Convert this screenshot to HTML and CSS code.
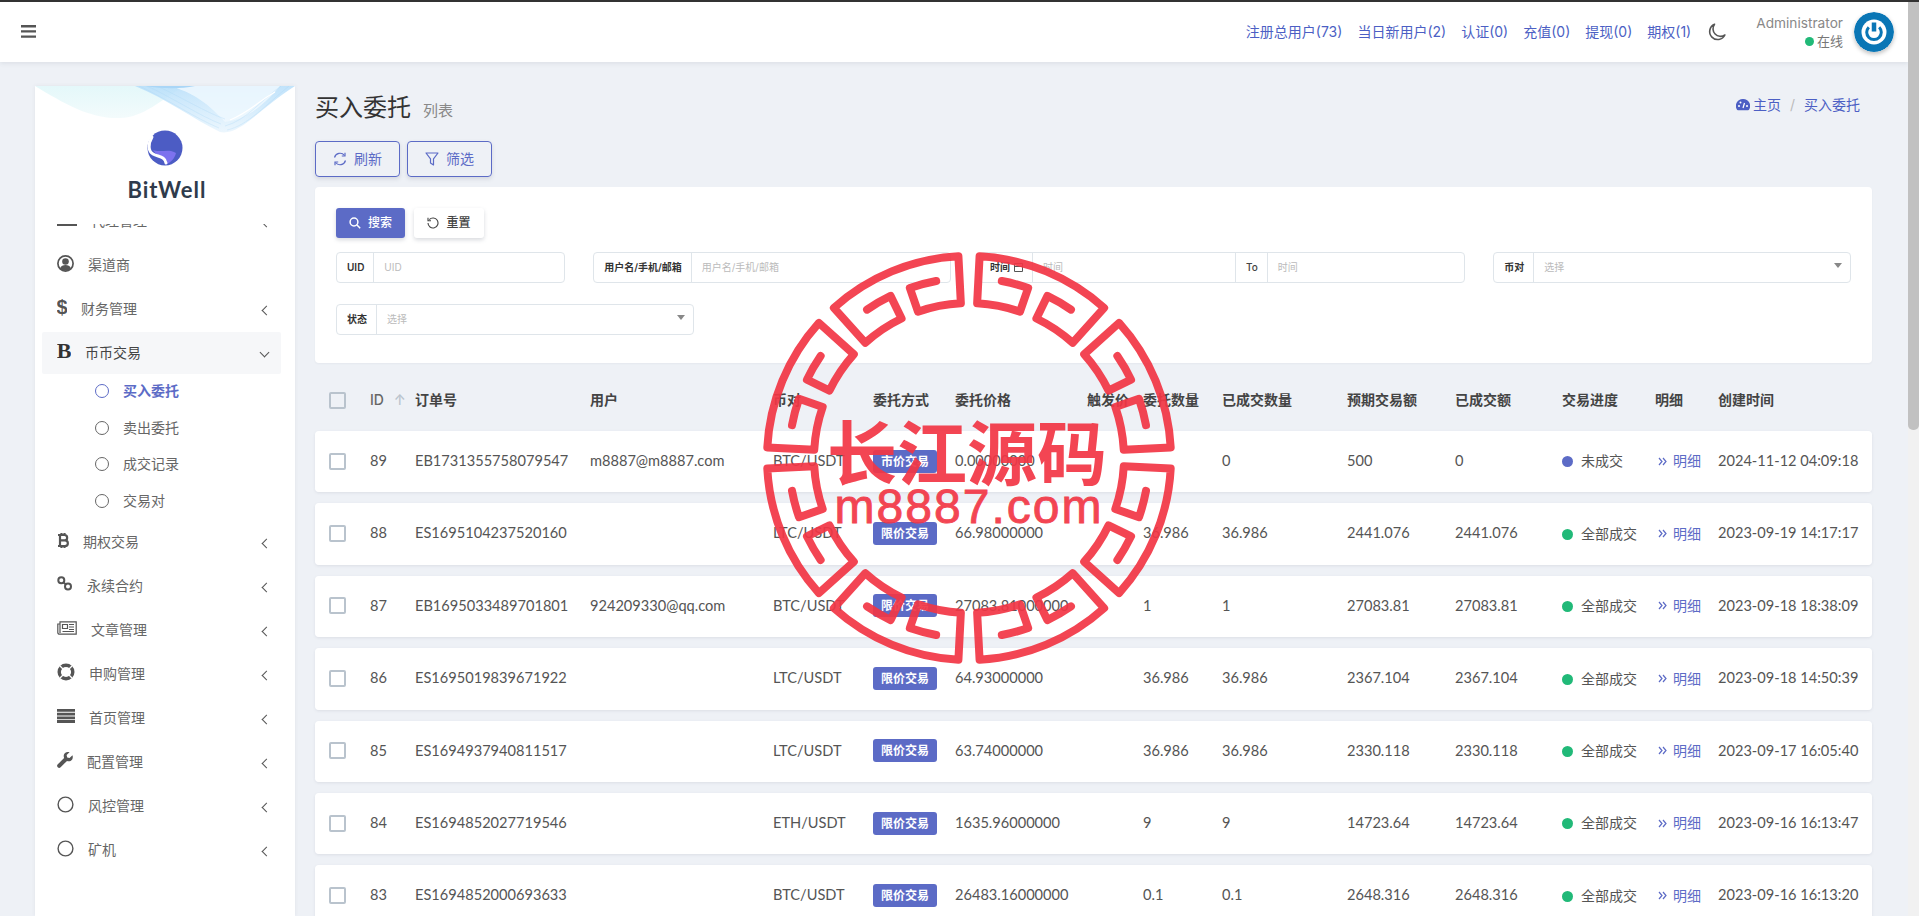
FILE: index.html
```html
<!DOCTYPE html>
<html lang="zh-CN">
<head>
<meta charset="utf-8">
<title>买入委托</title>
<link rel="stylesheet" href="styles.css">
</head>
<body>
<header class="topbar">
  <svg class="burger" width="15" height="13" viewBox="0 0 15 13"><path d="M0 0h15v2.400H0zM0 5.200h15v2.400H0zM0 10.400h15v2.400H0z" fill="#555"/></svg>
  <nav class="toplinks">
    <a>注册总用户(73)</a><a>当日新用户(2)</a><a>认证(0)</a><a>充值(0)</a><a>提现(0)</a><a>期权(1)</a>
  </nav>
  <svg class="moon" width="18" height="18" viewBox="0 0 18 18"><path d="M6.500 1.200A8 8 0 1 0 16.900 12 7.600 7.600 0 0 1 6.500 1.200z" fill="none" stroke="#555" stroke-width="1.600" stroke-linejoin="round"/></svg>
  <div class="who">
    <div class="who-name">Administrator</div>
    <div class="who-state"><i class="dot dot-green"></i>在线</div>
  </div>
  <svg class="avatar" width="40" height="40" viewBox="0 0 40 40"><circle cx="20" cy="20" r="20" fill="#0a76b5"/><circle cx="20" cy="20" r="12.500" fill="#fff"/><path d="M20 10.500v9" stroke="#0a76b5" stroke-width="4.500"/><path d="M14.800 15.200a7.300 7.300 0 1 0 10.400 0" fill="none" stroke="#0a76b5" stroke-width="3"/></svg>
</header>

<div class="shell">
  <aside class="sidebar">
    <svg class="wave" width="260" height="48" viewBox="0 0 260 48">
      <defs>
        <linearGradient id="waveBlue" x1="0" y1="0" x2="0" y2="1"><stop offset="0" stop-color="#b6defa"/><stop offset="1" stop-color="#e9f5fd"/></linearGradient>
        <linearGradient id="waveTeal" x1="0" y1="0" x2="0" y2="1"><stop offset="0" stop-color="#e4f8fa"/><stop offset="1" stop-color="#f3fbfc"/></linearGradient>
      </defs>
      <path d="M0 0C30 18 55 33 85 32C110 31 125 14 150 0Z" fill="url(#waveTeal)"/>
      <path d="M100 0C130 12 160 34 185 46C205 50 225 22 260 0Z" fill="url(#waveBlue)" opacity=".85"/>
      <path d="M135 0C155 6 170 14 190 36C215 34 235 12 245 0Z" fill="#eef8fe" opacity=".85"/>
      <g fill="none" stroke="#a9d6f7" stroke-width=".5" opacity=".6">
        <path d="M104 0C134 14 160 32 184 42"/><path d="M112 0C140 13 165 30 186 38"/><path d="M122 0C148 12 170 26 190 33"/><path d="M192 44C212 40 232 18 254 0"/><path d="M190 40C212 34 226 14 246 0"/>
      </g>
      <path d="M195 34C215 26 225 14 240 6" fill="none" stroke="#fff" stroke-width="1.200"/>
      <path d="M110 0C130 3 145 3 160 0Z" fill="#a9d6f7"/>
    </svg>
    <div class="brand">
      <svg width="36" height="36" viewBox="0 0 36 36"><circle cx="18" cy="18" r="17.500" fill="#4c5cc4"/><path d="M6 20C13 23 22 18 29 23C28 28 24 32 20 34C21 29 15 26 9 24Z" fill="#7d72ee"/><path d="M5 7C1 14 1 21 6 24C11 27 18 26 19 33" fill="none" stroke="#fff" stroke-width="3" stroke-linecap="round"/></svg>
      <div class="brand-name">BitWell</div>
    </div>
    <div class="menu-clip">
      <ul class="menu">
        <li class="item item-scrolled"><svg width="20" height="13" viewBox="0 0 20 13"><path d="M0 0h20v13H0z" fill="#555"/></svg><span>代理管理</span><b class="chev"></b></li>
        <li class="item"><svg width="17" height="17" viewBox="0 0 17 17"><circle cx="8.500" cy="8.500" r="7.600" fill="none" stroke="#555" stroke-width="1.700"/><circle cx="8.500" cy="6.500" r="3.300" fill="#555"/><path d="M3 13.500c1-3 3-3.600 5.500-3.600s4.500.6 5.500 3.600a7.600 7.600 0 0 1-11 0z" fill="#555"/></svg><span>渠道商</span></li>
        <li class="item"><svg width="10" height="20" viewBox="0 0 10 20"><text x="5" y="17" class="glyph-dollar">$</text></svg><span>财务管理</span><b class="chev"></b></li>
        <li class="item item-open"><svg width="14" height="18" viewBox="0 0 14 18"><text x="7" y="16" class="glyph-b">B</text></svg><span>币币交易</span><b class="chev chev-down"></b></li>
        <li class="sub sub-active"><i class="ring"></i><span>买入委托</span></li>
        <li class="sub"><i class="ring"></i><span>卖出委托</span></li>
        <li class="sub"><i class="ring"></i><span>成交记录</span></li>
        <li class="sub sub-last"><i class="ring"></i><span>交易对</span></li>
        <li class="item"><svg width="12" height="17" viewBox="0 0 12 17"><path d="M3 3v11M3 3h4.500a2.500 2.500 0 0 1 0 5.300H3M3 8.300h5a2.800 2.800 0 0 1 0 5.700H3M1 3h2M1 14h2M4.500 1v2M7.500 1v2M4.500 14v2M7.500 14v2" fill="none" stroke="#555" stroke-width="2.200"/></svg><span>期权交易</span><b class="chev"></b></li>
        <li class="item"><svg width="16" height="16" viewBox="0 0 16 16"><g fill="none" stroke="#555" stroke-width="2"><circle cx="4.300" cy="4.300" r="3"/><circle cx="11" cy="10.500" r="3"/><path d="M6.500 6.500l2.500 2"/></g></svg><span>永续合约</span><b class="chev"></b></li>
        <li class="item"><svg width="20" height="14" viewBox="0 0 20 14"><g fill="none" stroke="#555" stroke-width="1.200"><path d="M3 .8h16.200v12.400H2.500A1.700 1.700 0 0 1 .8 11.500V3H3zM3 3v9"/><path d="M5.500 3.500h5v4h-5zM12 3.500h5M12 6h5M12 8.500h5M5.500 10.500h11.500"/></g></svg><span>文章管理</span><b class="chev"></b></li>
        <li class="item"><svg width="18" height="18" viewBox="0 0 18 18"><circle cx="9" cy="9" r="6.800" fill="none" stroke="#555" stroke-width="3.400"/><path d="M3 3l4 4M15 3l-4 4M3 15l4-4M15 15l-4-4" stroke="#fff" stroke-width="1.300"/></svg><span>申购管理</span><b class="chev"></b></li>
        <li class="item"><svg width="18" height="14" viewBox="0 0 18 14"><path d="M0 0h18v2.800H0zM0 3.700h18v2.800H0zM0 7.400h18v2.800H0zM0 11.100h18v2.800H0z" fill="#555"/></svg><span>首页管理</span><b class="chev"></b></li>
        <li class="item"><svg width="16" height="16" viewBox="0 0 16 16"><path d="M15.500 3.200l-3 2.800-2.300-.6-.6-2.300 2.900-2.900C10.300-.5 7.800.5 7 2.500 6.500 3.800 6.700 5 7.100 6L.8 12.300a2 2 0 0 0 2.800 2.900L10 8.900c1.100.5 2.400.6 3.500.1 2-.9 2.800-3.500 2-5.800z" fill="#555"/></svg><span>配置管理</span><b class="chev"></b></li>
        <li class="item"><svg width="17" height="17" viewBox="0 0 17 17"><circle cx="8.500" cy="8.500" r="7.400" fill="none" stroke="#555" stroke-width="1.400"/></svg><span>风控管理</span><b class="chev"></b></li>
        <li class="item"><svg width="17" height="17" viewBox="0 0 17 17"><circle cx="8.500" cy="8.500" r="7.400" fill="none" stroke="#555" stroke-width="1.400"/></svg><span>矿机</span><b class="chev"></b></li>
      </ul>
    </div>
  </aside>

  <main class="main">
    <div class="titlebar">
      <h1>买入委托</h1><small>列表</small>
      <div class="crumbs">
        <svg width="14" height="12" viewBox="0 0 14 12"><path d="M7 0a7 7 0 0 0-6 10.800c.2.300.5.500.9.500h10.200c.4 0 .7-.2.900-.5A7 7 0 0 0 7 0z" fill="#4c5fc4"/><path d="M7 9l1.500-5" stroke="#fff" stroke-width="1.200"/><circle cx="3" cy="7" r="1" fill="#fff"/><circle cx="4.500" cy="3.500" r="1" fill="#fff"/><circle cx="11" cy="7" r="1" fill="#fff"/></svg>
        <a>主页</a><em>/</em><a>买入委托</a>
      </div>
    </div>
    <div class="tools">
      <button class="tool"><svg width="14" height="14" viewBox="0 0 14 14"><g fill="none" stroke="#5c6bc6" stroke-width="1.200"><path d="M1.500 5.500A5.700 5.700 0 0 1 11.500 3.500M12.500 8.500A5.700 5.700 0 0 1 2.500 10.500"/><path d="M12 .8v3.200H8.800M2 13.200V10h3.200"/></g></svg>刷新</button>
      <button class="tool"><svg width="14" height="14" viewBox="0 0 14 14"><path d="M1 1h12L8.500 6.800V13L5.500 11V6.800z" fill="none" stroke="#5c6bc6" stroke-width="1.200" stroke-linejoin="round"/></svg>筛选</button>
    </div>
    <section class="filter">
      <div class="filter-actions">
        <button class="btn btn-primary"><svg width="12" height="12" viewBox="0 0 12 12"><circle cx="5" cy="5" r="3.900" fill="none" stroke="#fff" stroke-width="1.500"/><path d="M8 8l3.200 3.200" stroke="#fff" stroke-width="1.500"/></svg>搜索</button>
        <button class="btn btn-plain"><svg width="12" height="12" viewBox="0 0 12 12"><path d="M2.300 2.600A5 5 0 1 1 1 6" fill="none" stroke="#444" stroke-width="1.100"/><path d="M1 .8v3h3" fill="none" stroke="#444" stroke-width="1.100"/></svg>重置</button>
      </div>
      <div class="filter-grid">
        <div class="group span2"><label>UID</label><span class="ph">UID</span></div>
        <div class="group span3"><label>用户名/手机/邮箱</label><span class="ph">用户名/手机/邮箱</span></div>
        <div class="group span4"><label>时间 <svg width="9" height="10" viewBox="0 0 9 10"><path d="M.5 1.500h8v8h-8zM.5 4.500h8" fill="none" stroke="#555"/></svg></label><span class="ph">时间</span><label class="to">To</label><span class="ph">时间</span></div>
        <div class="group span3"><label>币对</label><span class="ph">选择</span><i class="caret"></i></div>
        <div class="group span3"><label>状态</label><span class="ph">选择</span><i class="caret"></i></div>
      </div>
    </section>

    <table class="orders">
      <thead>
        <tr>
          <th><i class="check"></i></th>
          <th class="th-id">ID <span class="sort">↑</span></th>
          <th>订单号</th><th>用户</th><th>币对</th><th>委托方式</th><th>委托价格</th><th>触发价</th><th>委托数量</th><th>已成交数量</th><th>预期交易额</th><th>已成交额</th><th>交易进度</th><th>明细</th><th>创建时间</th>
        </tr>
      </thead>
      <tbody>
        <tr><td><i class="check"></i></td><td>89</td><td>EB1731355758079547</td><td>m8887@m8887.com</td><td>BTC/USDT</td><td><span class="badge">市价交易</span></td><td>0.00000000</td><td></td><td></td><td>0</td><td>500</td><td>0</td><td><i class="dot dot-blue"></i>未成交</td><td><a class="more"><svg width="9" height="9" viewBox="0 0 9 9"><path d="M1 1l3 3.500-3 3.500M5 1l3 3.500-3 3.500" fill="none" stroke="#5c6bc6" stroke-width="1.200"/></svg><span>明细</span></a></td><td>2024-11-12 04:09:18</td></tr>
        <tr><td><i class="check"></i></td><td>88</td><td>ES1695104237520160</td><td></td><td>LTC/USDT</td><td><span class="badge">限价交易</span></td><td>66.98000000</td><td></td><td>36.986</td><td>36.986</td><td>2441.076</td><td>2441.076</td><td><i class="dot dot-green"></i>全部成交</td><td><a class="more"><svg width="9" height="9" viewBox="0 0 9 9"><path d="M1 1l3 3.500-3 3.500M5 1l3 3.500-3 3.500" fill="none" stroke="#5c6bc6" stroke-width="1.200"/></svg><span>明细</span></a></td><td>2023-09-19 14:17:17</td></tr>
        <tr><td><i class="check"></i></td><td>87</td><td>EB1695033489701801</td><td>924209330@qq.com</td><td>BTC/USDT</td><td><span class="badge">限价交易</span></td><td>27083.81000000</td><td></td><td>1</td><td>1</td><td>27083.81</td><td>27083.81</td><td><i class="dot dot-green"></i>全部成交</td><td><a class="more"><svg width="9" height="9" viewBox="0 0 9 9"><path d="M1 1l3 3.500-3 3.500M5 1l3 3.500-3 3.500" fill="none" stroke="#5c6bc6" stroke-width="1.200"/></svg><span>明细</span></a></td><td>2023-09-18 18:38:09</td></tr>
        <tr><td><i class="check"></i></td><td>86</td><td>ES1695019839671922</td><td></td><td>LTC/USDT</td><td><span class="badge">限价交易</span></td><td>64.93000000</td><td></td><td>36.986</td><td>36.986</td><td>2367.104</td><td>2367.104</td><td><i class="dot dot-green"></i>全部成交</td><td><a class="more"><svg width="9" height="9" viewBox="0 0 9 9"><path d="M1 1l3 3.500-3 3.500M5 1l3 3.500-3 3.500" fill="none" stroke="#5c6bc6" stroke-width="1.200"/></svg><span>明细</span></a></td><td>2023-09-18 14:50:39</td></tr>
        <tr><td><i class="check"></i></td><td>85</td><td>ES1694937940811517</td><td></td><td>LTC/USDT</td><td><span class="badge">限价交易</span></td><td>63.74000000</td><td></td><td>36.986</td><td>36.986</td><td>2330.118</td><td>2330.118</td><td><i class="dot dot-green"></i>全部成交</td><td><a class="more"><svg width="9" height="9" viewBox="0 0 9 9"><path d="M1 1l3 3.500-3 3.500M5 1l3 3.500-3 3.500" fill="none" stroke="#5c6bc6" stroke-width="1.200"/></svg><span>明细</span></a></td><td>2023-09-17 16:05:40</td></tr>
        <tr><td><i class="check"></i></td><td>84</td><td>ES1694852027719546</td><td></td><td>ETH/USDT</td><td><span class="badge">限价交易</span></td><td>1635.96000000</td><td></td><td>9</td><td>9</td><td>14723.64</td><td>14723.64</td><td><i class="dot dot-green"></i>全部成交</td><td><a class="more"><svg width="9" height="9" viewBox="0 0 9 9"><path d="M1 1l3 3.500-3 3.500M5 1l3 3.500-3 3.500" fill="none" stroke="#5c6bc6" stroke-width="1.200"/></svg><span>明细</span></a></td><td>2023-09-16 16:13:47</td></tr>
        <tr><td><i class="check"></i></td><td>83</td><td>ES1694852000693633</td><td></td><td>BTC/USDT</td><td><span class="badge">限价交易</span></td><td>26483.16000000</td><td></td><td>0.1</td><td>0.1</td><td>2648.316</td><td>2648.316</td><td><i class="dot dot-green"></i>全部成交</td><td><a class="more"><svg width="9" height="9" viewBox="0 0 9 9"><path d="M1 1l3 3.500-3 3.500M5 1l3 3.500-3 3.500" fill="none" stroke="#5c6bc6" stroke-width="1.200"/></svg><span>明细</span></a></td><td>2023-09-16 16:13:20</td></tr>
      </tbody>
    </table>
  </main>
</div>

<svg class="seal" width="424" height="424" viewBox="-212 -212 424 424">
  <defs>
    <path id="fret" d="M-37.400-176.100A180 180 0 0 1-10.400-179.700L-8.900-154.700A155 155 0 0 0-51.700-146.100L-67.400-190.400A202 202 0 0 1 67.400-190.400L51.700-146.100A155 155 0 0 0 8.900-154.700L10.400-179.700A180 180 0 0 1 37.400-176.100"/>
  </defs>
  <g class="seal-ring">
    <use href="#fret" transform="rotate(22.5)"/>
    <use href="#fret" transform="rotate(67.5)"/>
    <use href="#fret" transform="rotate(112.5)"/>
    <use href="#fret" transform="rotate(157.5)"/>
    <use href="#fret" transform="rotate(202.5)"/>
    <use href="#fret" transform="rotate(247.5)"/>
    <use href="#fret" transform="rotate(292.500)"/>
    <use href="#fret" transform="rotate(337.500)"/>
  </g>
  <text class="seal-cn" x="-2" y="22">长江源码</text>
  <text class="seal-en" x="0" y="65">m8887.com</text>
</svg>

<div class="scrollbar"><div class="scrollbar-thumb"></div></div>
</body>
</html>
```
FILE: styles.css
```css
* { box-sizing: border-box; }
body {
  margin: 0;
  width: 1908px;
  background: #eef1f6;
  color: #555;
  font: 14px/1.4 Inter, "Noto Sans CJK SC", sans-serif;
  min-height: 1950px;
  position: relative;
}
html { background: #eef1f6; overflow-x: hidden; }
a { color: #4c5fc4; }
ul { list-style: none; margin: 0; padding: 0; }

.scrollbar {
  position: fixed;
  top: 0;
  right: 0;
  width: 11px;
  height: 100vh;
  background: #f1f1f1;
  border-top: 2px solid #333;
}
.scrollbar-thumb { height: 428px; background: #c1c1c1; border-radius: 0 0 5px 5px; }

.topbar {
  height: 62px;
  background: #fff;
  border-top: 2px solid #333;
  box-shadow: 0 1px 5px rgba(60, 70, 90, .12);
  display: flex;
  align-items: center;
  padding: 0 14px 0 21px;
}
.burger { margin-top: -2px; }
.toplinks { margin-left: auto; display: flex; gap: 15px; }
.moon { margin-left: 17px; }
.who { margin-left: 30px; text-align: right; font-size: 13.700px; color: #888; line-height: 18px; }
.who-state { display: flex; align-items: center; justify-content: flex-end; gap: 3px; font-size: 13px; color: #777; }
.avatar { margin-left: 11px; border-radius: 50%; box-shadow: 0 2px 4px rgba(0, 0, 0, .25); }

.dot { display: inline-block; width: 11px; height: 11px; border-radius: 50%; margin-right: 8px; vertical-align: -1px; }
.who-state .dot { width: 9px; height: 9px; margin-right: 0; }
.dot-green { background: #21b978; }
.dot-blue { background: #5c6bc6; }

.shell { display: flex; align-items: flex-start; }
.sidebar {
  width: 260px;
  height: 830px;
  margin: 24px 0 0 35px;
  background: #fff;
  box-shadow: 0 0 4px rgba(60, 70, 90, .08);
  overflow: hidden;
  position: relative;
  flex: none;
}
.wave { position: absolute; top: 0; left: 0; }
.brand { position: relative; height: 138px; padding-top: 44px; text-align: center; }
.brand svg { display: block; margin: 0 auto; }
.brand-name { font: 700 22px/28px Lato, sans-serif; color: #2f3b4c; letter-spacing: 1px; margin: 10px 0 0 4px; }
.menu-clip { height: 692px; overflow: hidden; }
.menu { padding: 0 14px 0 7px; }
.item {
  height: 42px;
  margin: 2px 0;
  padding: 0 15px;
  display: flex;
  align-items: center;
  gap: 14px;
  border-radius: 2px;
  color: #666;
  position: relative;
  font-size: 14px;
}
.item svg { flex: none; margin-top: -4px; }
.item-scrolled { margin-top: -24px; }
.item-open { background: #f6f7f9; color: #444; margin-bottom: -1px; }
.chev {
  position: absolute;
  right: 11px;
  top: 19px;
  width: 7px;
  height: 7px;
  border-left: 1.300px solid #555;
  border-bottom: 1.300px solid #555;
  transform: rotate(45deg);
}
.chev-down { transform: rotate(-45deg); top: 17px; right: 13px; }
.glyph-dollar { font: 700 20px "Liberation Sans", sans-serif; fill: #555; text-anchor: middle; }
.glyph-b { font: 700 22px "Liberation Serif", serif; fill: #333; text-anchor: middle; }
.sub { height: 36.500px; display: flex; align-items: center; padding-left: 53px; gap: 14px; color: #666; }
.sub-last { margin-bottom: 2px; }
.ring { width: 14px; height: 14px; border: 1.300px solid #666; border-radius: 50%; flex: none; }
.sub-active { color: #5c6bc6; font-weight: 600; }
.sub-active .ring { border-color: #5c6bc6; }

.main { width: 1557px; margin: 24px 0 0 20px; flex: none; }
.titlebar { height: 44px; display: flex; align-items: center; position: relative; }
.titlebar h1 { margin: 0; font-size: 24px; font-weight: 400; color: #333; }
.titlebar small { font-size: 15px; margin: 4px 0 0 12px; color: #888; }
.crumbs { margin-left: auto; margin-right: 12px; margin-top: -7px; display: flex; align-items: center; gap: 3px; }
.crumbs em { font-style: normal; color: #bbb; margin: 0 6px; }

.tools { display: flex; gap: 7px; margin-top: 11px; }
button { font: inherit; cursor: pointer; }
.tool {
  height: 36px;
  width: 85px;
  display: flex;
  align-items: center;
  justify-content: center;
  gap: 7px;
  background: transparent;
  color: #5c6bc6;
  border: 1.300px solid #5c6bc6;
  border-radius: 4px;
  box-shadow: 0 2px 4px rgba(60, 70, 90, .15);
}

.filter {
  margin-top: 10px;
  height: 175.500px;
  background: #fff;
  border-radius: 4px;
  padding: 21px 21px 0;
  box-shadow: 0 1px 2px rgba(60, 70, 90, .05);
}
.filter-actions { display: flex; gap: 9px; }
.btn {
  height: 30px;
  width: 69px;
  border: 0;
  border-radius: 3px;
  display: flex;
  align-items: center;
  justify-content: center;
  gap: 7px;
  font-size: 12px;
  font-weight: 500;
  box-shadow: 0 2px 4px rgba(60, 70, 90, .2);
}
.btn-primary { background: #5c6bc6; color: #fff; }
.btn-plain { background: #fff; color: #444; width: 70px; }
.filter-grid {
  margin-top: 14px;
  display: grid;
  grid-template-columns: repeat(12, 1fr);
  column-gap: 28px;
  row-gap: 21.500px;
}
.span2 { grid-column: span 2; }
.span3 { grid-column: span 3; }
.span4 { grid-column: span 4; }
.group {
  height: 30.500px;
  border: 1px solid #dfe5ea;
  border-radius: 4px;
  display: flex;
  align-items: center;
  font-size: 10px;
  position: relative;
}
.group label {
  height: 100%;
  display: flex;
  align-items: center;
  gap: 4px;
  padding: 0 9px 0 10px;
  font-weight: 600;
  color: #333;
  border-right: 1px solid #dfe5ea;
  flex: none;
}
.group label.to { border-left: 1px solid #dfe5ea; font-weight: 500; color: #444; }
.ph { padding-left: 10px; color: #bbb; flex: 1; }
.span4 .ph:nth-of-type(1) { flex: none; width: 202px; }
.caret {
  position: absolute;
  right: 8px;
  top: 10px;
  border: 4px solid transparent;
  border-top: 5px solid #888;
}

.orders {
  width: 1557px;
  table-layout: fixed;
  border-collapse: separate;
  border-spacing: 0 11px;
}
.orders th { height: 46.500px; padding: 7px 0 0; text-align: left; font-weight: 600; color: #444; }
.orders td {
  height: 61.400px;
  padding: 0 0 1px;
  background: #fff;
  white-space: nowrap;
  font-family: Lato, "Noto Sans CJK SC", sans-serif;
  font-size: 14.600px;
}
.orders td:nth-child(13) { font-size: 14px; }
.orders tbody tr { box-shadow: 0 1px 3px rgba(60, 70, 90, .1); border-radius: 4px; }
.orders td:first-child { border-radius: 4px 0 0 4px; }
.orders td:last-child { border-radius: 0 4px 4px 0; }
.orders th:nth-child(1) { width: 55px; }
.orders th:nth-child(2) { width: 45px; }
.orders th:nth-child(3) { width: 175px; }
.orders th:nth-child(4) { width: 183px; }
.orders th:nth-child(5) { width: 100px; }
.orders th:nth-child(6) { width: 82px; }
.orders th:nth-child(7) { width: 132px; }
.orders th:nth-child(8) { width: 56px; }
.orders th:nth-child(9) { width: 79px; }
.orders th:nth-child(10) { width: 125px; }
.orders th:nth-child(11) { width: 108px; }
.orders th:nth-child(12) { width: 107px; }
.orders th:nth-child(13) { width: 93px; }
.orders th:nth-child(14) { width: 63px; }
.orders th:nth-child(15) { width: 154px; }
.th-id { font-weight: 500 !important; color: #666 !important; }
.sort { color: #b9c3cd; margin-left: 6px; }
.check {
  display: block;
  width: 17px;
  height: 17px;
  margin-left: 14px;
  border: 2px solid #b9c3cd;
  border-radius: 2px;
  background: #fff;
}
thead .check { background: transparent; }
.badge {
  display: inline-block;
  width: 64px;
  height: 23px;
  line-height: 23px;
  text-align: center;
  background: #5c6bc6;
  color: #fff;
  font-size: 12px;
  font-weight: 700;
  border-radius: 3px;
}
.more { color: #5c6bc6; display: flex; align-items: center; padding-left: 3px; }
.more span { margin-left: 6px; font-size: 14px; }

.seal { position: absolute; left: 757px; top: 246px; opacity: .92; pointer-events: none; }
.seal-ring { fill: none; stroke: #f23645; stroke-width: 8; stroke-linejoin: round; stroke-linecap: round; }
.seal-cn { font: 700 70px "Noto Sans CJK SC", sans-serif; fill: #f23645; text-anchor: middle; }
.seal-en { font: 400 48px "Liberation Sans", sans-serif; fill: #f23645; stroke: #f23645; stroke-width: .9; letter-spacing: 2px; text-anchor: middle; }
```
